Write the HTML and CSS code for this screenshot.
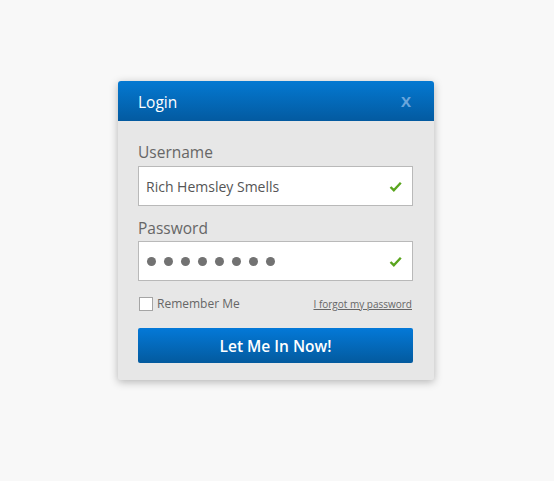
FILE: index.html
```html
<!DOCTYPE html>
<html>
<head>
<meta charset="utf-8">
<link rel="stylesheet" href="styles.css">
</head>
<body>
<div class="page">
  <div class="card">
    <div class="header">
      <span class="title">Login</span>
      <span class="close">X</span>
    </div>
    <div class="body">
      <div class="label">Username</div>
      <div class="input">
        <span class="value">Rich Hemsley Smells</span>
        <svg class="check" width="13" height="11" viewBox="0 0 13 11"><path d="M1.5 6 L4.8 9.2 L11.8 1.8" fill="none" stroke="#5aa51e" stroke-width="2.4" stroke-linejoin="miter"/></svg>
      </div>
      <div class="label label2">Password</div>
      <div class="input">
        <span class="dots"><i></i><i></i><i></i><i></i><i></i><i></i><i></i><i></i></span>
        <svg class="check" width="13" height="11" viewBox="0 0 13 11"><path d="M1.5 6 L4.8 9.2 L11.8 1.8" fill="none" stroke="#5aa51e" stroke-width="2.4" stroke-linejoin="miter"/></svg>
      </div>
      <div class="options">
        <label class="remember"><span class="box"></span>Remember Me</label>
        <span class="forgot">I forgot my password</span>
      </div>
      <div class="button">Let Me In Now!</div>
    </div>
  </div>
</div>
</body>
</html>
```
FILE: styles.css
```css
html, body {
  margin: 0;
  padding: 0;
  background: #f8f8f8;
  font-family: "Open Sans", "Noto Sans", sans-serif;
}
.page {
  width: 554px;
  height: 481px;
  padding-top: 81px;
  padding-left: 118px;
  box-sizing: border-box;
}
.card {
  width: 316px;
  height: 299px;
  background: #e7e7e7;
  border-radius: 3px 3px 2px 2px;
  box-shadow: 0 2px 8px rgba(0,0,0,0.28);
  overflow: hidden;
}
.header {
  height: 40px;
  background: linear-gradient(#0479d2, #035aa0);
  display: flex;
  align-items: center;
  justify-content: space-between;
  padding: 0 23px 0 20px;
}
.title {
  color: #fff;
  font-size: 15.5px;
  margin-top: 1px;
}
.close {
  color: #6aa6dc;
  font-size: 15px;
  font-weight: bold;
}
.body {
  padding: 20px 21px 0 20px;
}
.label {
  color: #666;
  font-size: 15.5px;
  line-height: 22px;
  height: 25px;
}
.label2 {
  margin-top: 11px;
  height: 24px;
}
.input {
  height: 38px;
  background: #fff;
  border: 1px solid #b9b9b9;
  display: flex;
  align-items: center;
  justify-content: space-between;
  padding: 0 10px 0 7px;
}
.value {
  color: #555;
  font-size: 14px;
}
.check {
  display: block;
  margin-top: 1px;
}
.dots {
  display: flex;
  gap: 8px;
  padding-left: 1px;
}
.dots i {
  display: block;
  width: 9px;
  height: 9px;
  border-radius: 50%;
  background: #727272;
}
.options {
  display: flex;
  justify-content: space-between;
  align-items: center;
  margin-top: 14px;
  height: 17px;
}
.remember {
  display: flex;
  align-items: center;
  color: #666;
  font-size: 12px;
}
.box {
  width: 12px;
  height: 12px;
  background: #fff;
  border: 1px solid #a5a5a5;
  margin-left: 1px;
  margin-right: 4px;
}
.forgot {
  color: #666;
  font-size: 10px;
  text-decoration: underline;
  margin-right: 1px;
}
.button {
  margin-top: 16px;
  height: 35px;
  border-radius: 2px;
  background: linear-gradient(#0479d8, #035a9e);
  color: #fff;
  font-weight: 600;
  font-size: 15.5px;
  display: flex;
  align-items: center;
  justify-content: center;
}
```
